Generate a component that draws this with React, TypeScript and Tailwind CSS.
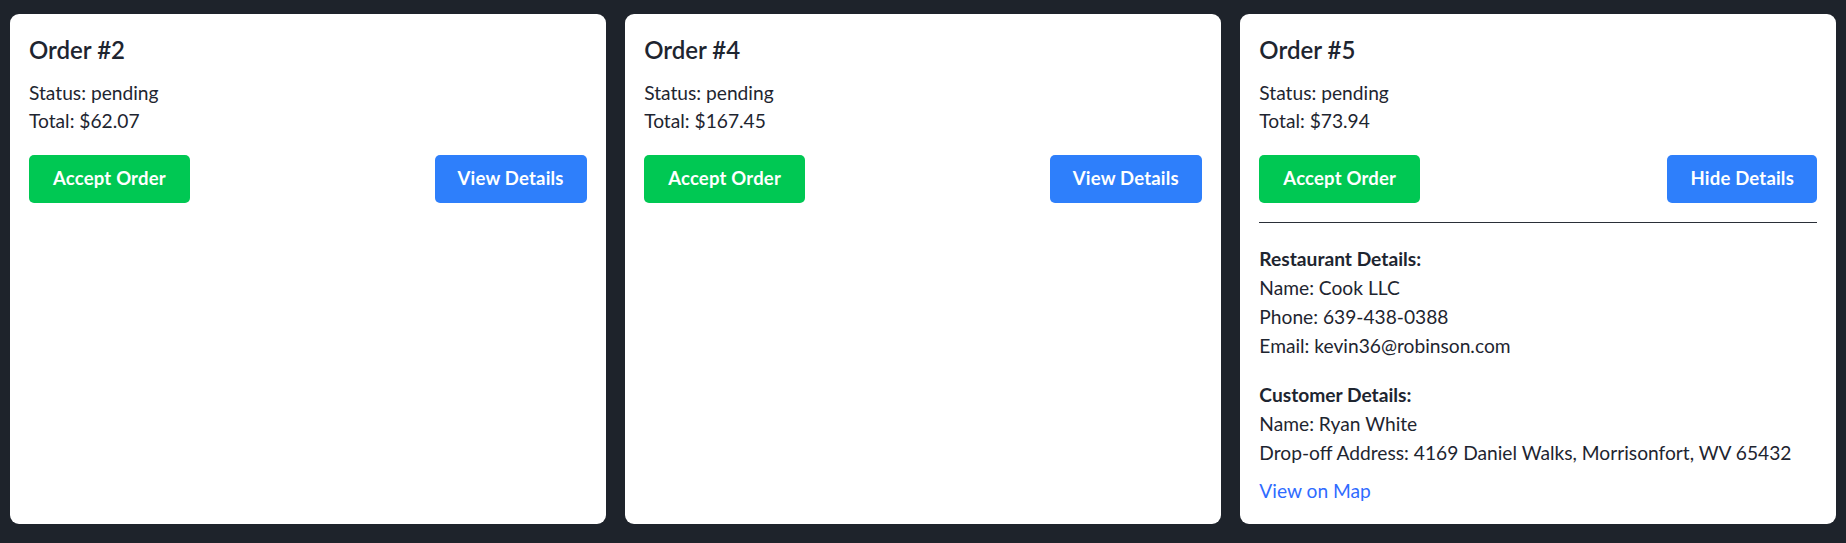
import React, { useState } from "react";

type Order = {
  id: number;
  status: string;
  total: string;
  restaurant: { name: string; phone: string; email: string };
  customer: { name: string; address: string };
};

const orders: Order[] = [
  {
    id: 2,
    status: "pending",
    total: "$62.07",
    restaurant: { name: "Hall Group", phone: "555-201-1182", email: "info@hallgroup.com" },
    customer: { name: "Anna Lopez", address: "12 Pine Street, Eastville, OH 44102" },
  },
  {
    id: 4,
    status: "pending",
    total: "$167.45",
    restaurant: { name: "Reed Inc", phone: "555-880-2291", email: "orders@reed.com" },
    customer: { name: "Mark Diaz", address: "88 Lake Road, Westport, CA 90210" },
  },
  {
    id: 5,
    status: "pending",
    total: "$73.94",
    restaurant: { name: "Cook LLC", phone: "639-438-0388", email: "kevin36@robinson.com" },
    customer: { name: "Ryan White", address: "4169 Daniel Walks, Morrisonfort, WV 65432" },
  },
];

function OrderCard({ order, open }: { order: Order; open: boolean }) {
  const [showDetails, setShowDetails] = useState(open);

  return (
    <div className="bg-white rounded-[9px] px-[19px] pt-[19px] pb-[19px] text-[#1e2530]">
      <h2 className="text-[24px] leading-[33.6px] font-semibold mb-[12px]">Order #{order.id}</h2>
      <p className="leading-[28.8px]">Status: {order.status}</p>
      <p className="leading-[28.8px]">Total: {order.total}</p>

      <div className="mt-[18.5px] flex justify-between">
        <button className="bg-[#00c853] text-white font-bold text-[18.5px] tracking-[0.2px] h-[48.5px] px-[24px] rounded-[5px]">
          Accept Order
        </button>
        <button
          onClick={() => setShowDetails(!showDetails)}
          className="bg-[#2e7ffb] text-white font-bold text-[18.5px] tracking-[0.2px] h-[48.5px] px-[23px] rounded-[5px]"
        >
          {showDetails ? "Hide Details" : "View Details"}
        </button>
      </div>

      {showDetails && (
        <div>
          <hr className="mt-[19px] mb-[21px] border-t border-[#2a2f38]" />
          <div className="leading-[29px]">
            <p className="font-bold">Restaurant Details:</p>
            <p>Name: {order.restaurant.name}</p>
            <p>Phone: {order.restaurant.phone}</p>
            <p>Email: {order.restaurant.email}</p>
          </div>
          <div className="mt-[19.5px] leading-[29px]">
            <p className="font-bold">Customer Details:</p>
            <p>Name: {order.customer.name}</p>
            <p>Drop-off Address: {order.customer.address}</p>
          </div>
          <a href="#" className="block mt-[10px] leading-[28.8px] text-[#2f6bff]">
            View on Map
          </a>
        </div>
      )}
    </div>
  );
}

export default function App() {
  return (
    <div
      className="min-h-screen bg-[#1e232b] px-[10px] pt-[14px] pb-[18px] text-[19.2px]"
      style={{ fontFamily: "Lato, 'Noto Sans', sans-serif" }}
    >
      <div className="grid grid-cols-3 gap-[19.5px]">
        {orders.map((o) => (
          <OrderCard key={o.id} order={o} open={o.id === 5} />
        ))}
      </div>
    </div>
  );
}
